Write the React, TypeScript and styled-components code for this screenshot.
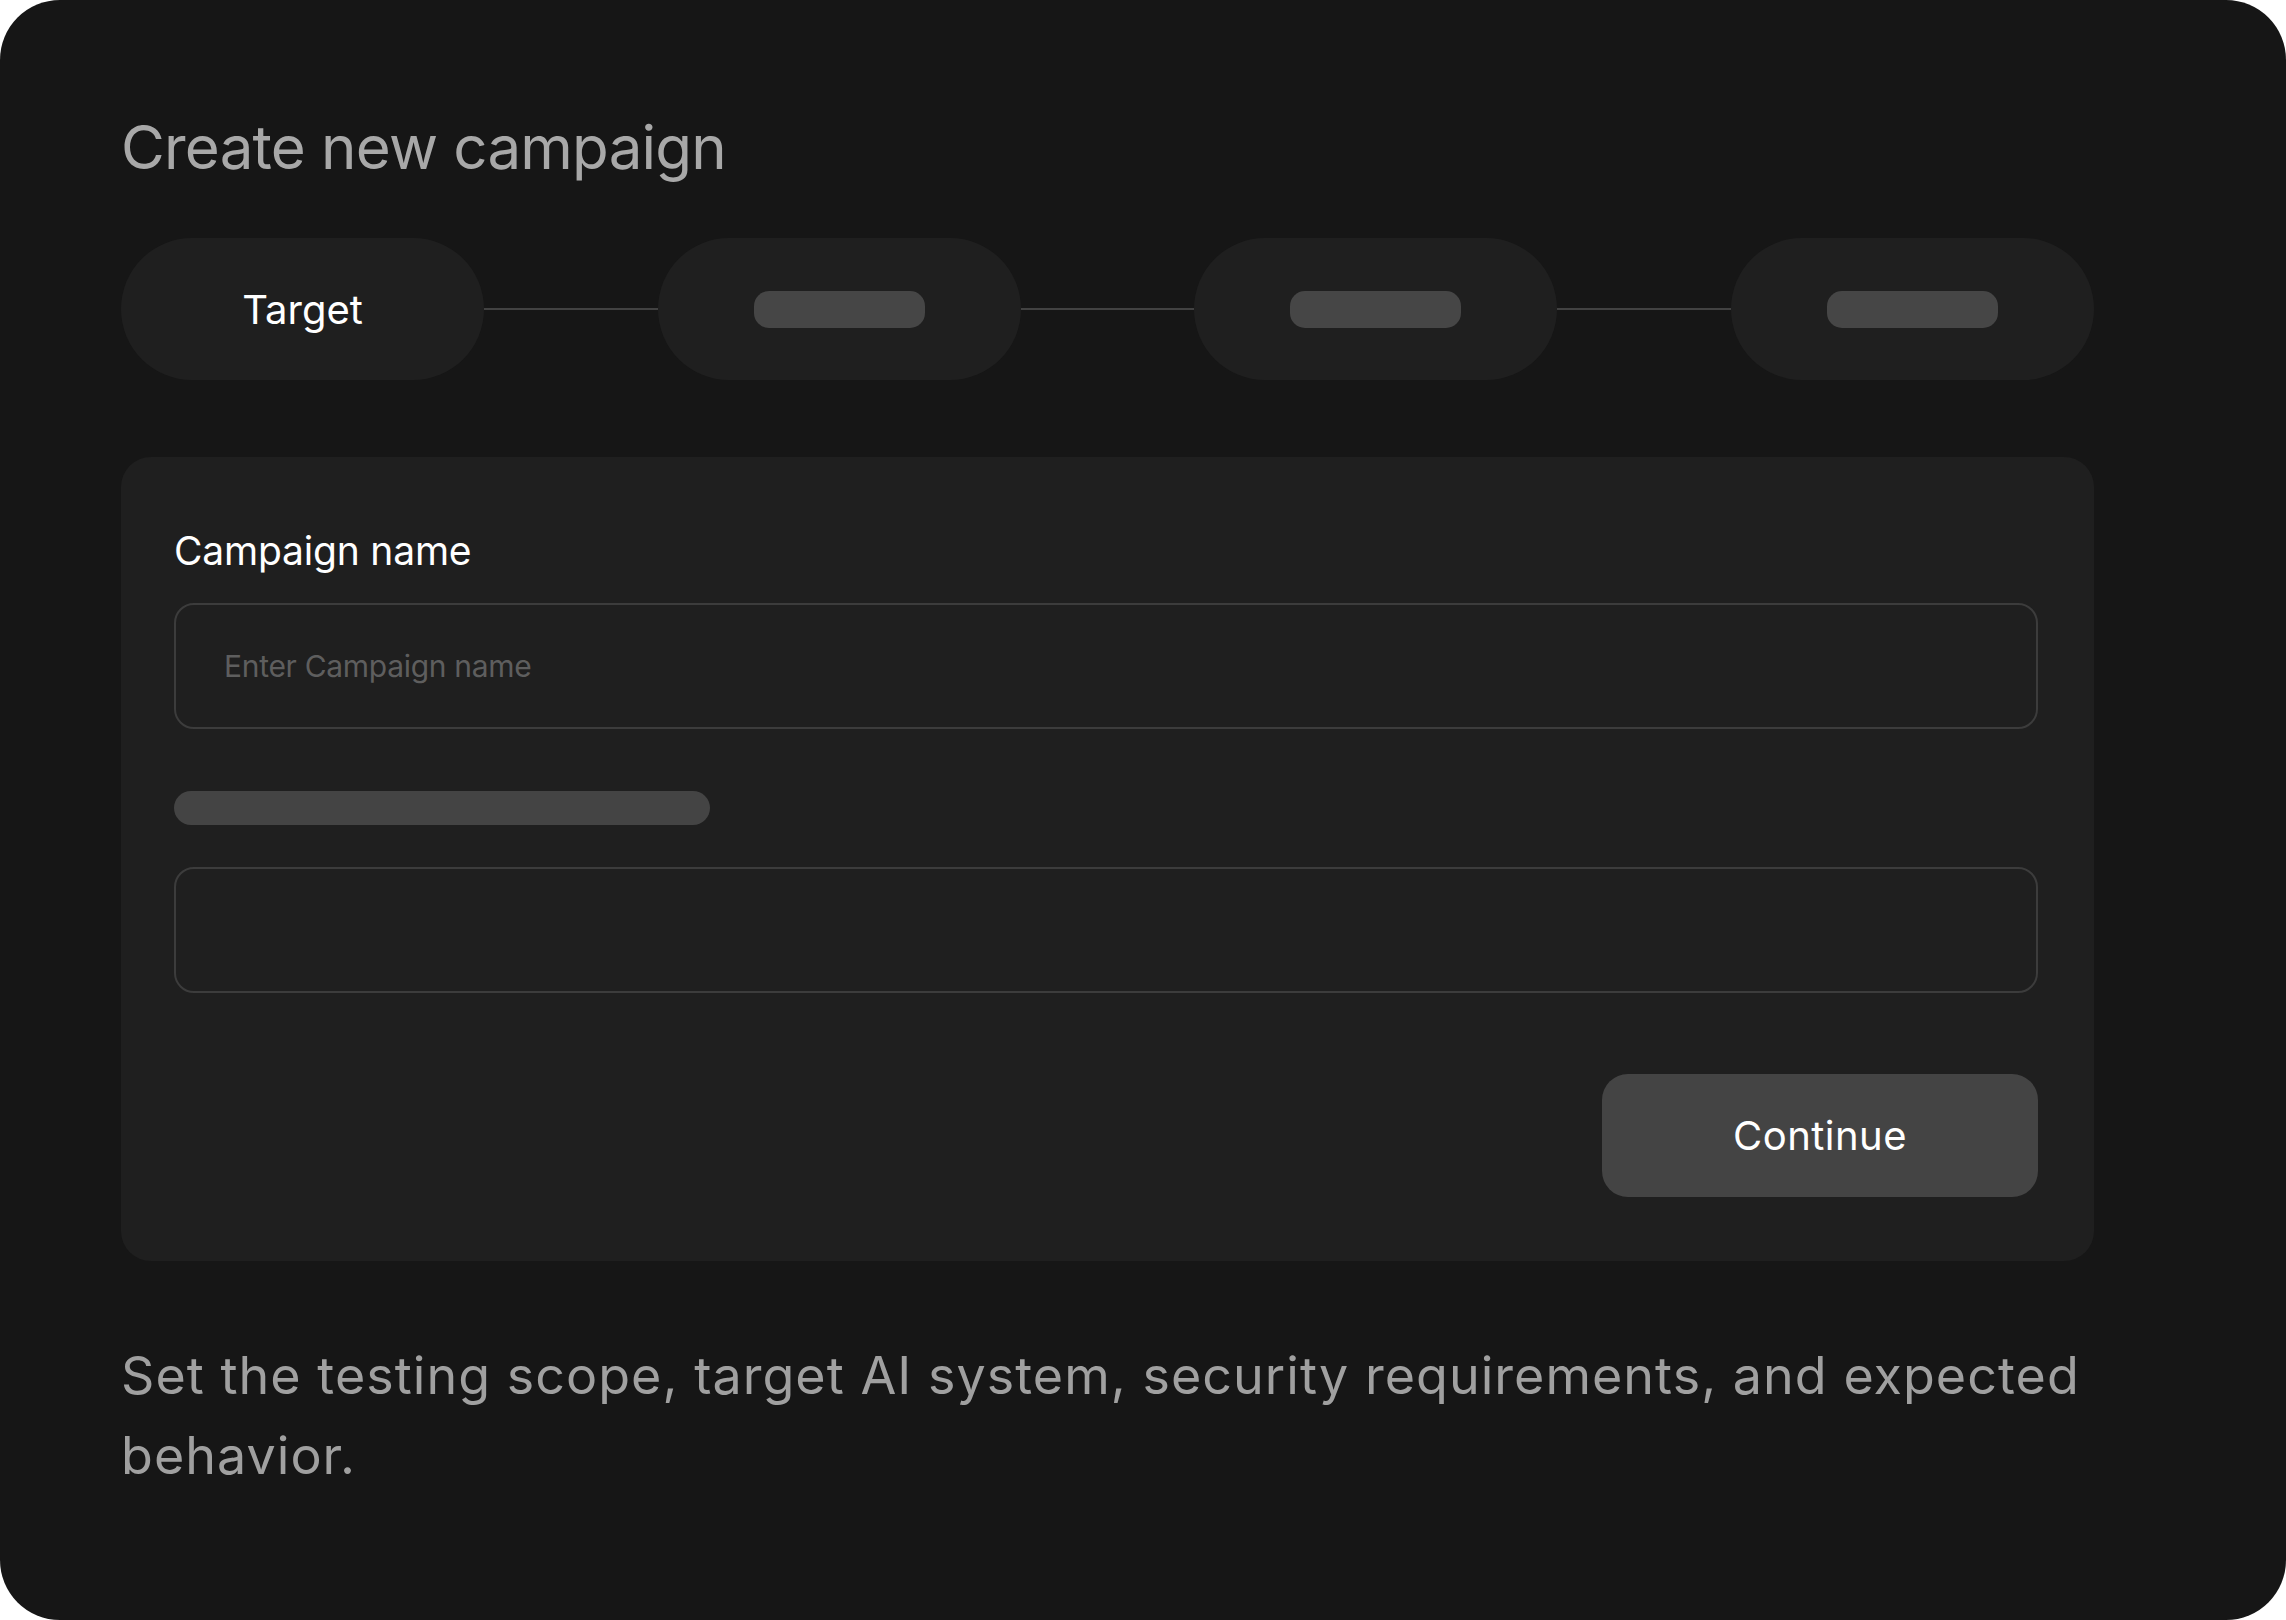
import styled, { createGlobalStyle } from "styled-components";

const GlobalStyle = createGlobalStyle`
  html, body {
    margin: 0;
    padding: 0;
    background: #ffffff;
  }
  * {
    box-sizing: border-box;
  }
`;

const Frame = styled.div`
  width: 2286px;
  height: 1620px;
  background-color: #161616;
  border-radius: 60px;
  padding: 111px 192px 0 121px;
  display: flex;
  flex-direction: column;
  font-family: Inter, "Noto Sans", sans-serif;
  overflow: hidden;
`;

const Title = styled.h1`
  margin: 0;
  font-size: 60px;
  line-height: 72px;
  font-weight: 400;
  letter-spacing: -0.013em;
  color: #a8a8a8;
`;

const Stepper = styled.div`
  margin-top: 55px;
  display: flex;
  align-items: center;
`;

const Step = styled.div`
  width: 363px;
  height: 142px;
  flex-shrink: 0;
  border-radius: 71px;
  background-color: #1f1f1f;
  display: flex;
  align-items: center;
  justify-content: center;
`;

const StepLabel = styled.span`
  font-size: 40px;
  letter-spacing: 0;
  color: #ffffff;
`;

const StepSkeleton = styled.span`
  width: 171px;
  height: 37px;
  border-radius: 15px;
  background-color: #464646;
`;

const Connector = styled.div`
  flex: 1;
  height: 2px;
  background-color: #424242;
`;

const FormCard = styled.section`
  margin-top: 77px;
  background-color: #1f1f1f;
  border-radius: 30px;
  padding: 72px 56px 64px 53px;
  display: flex;
  flex-direction: column;
`;

const FieldLabel = styled.label`
  font-size: 39px;
  line-height: 44px;
  letter-spacing: -0.005em;
  color: #ffffff;
`;

const TextInput = styled.input<{ $gap: number }>`
  margin-top: ${({ $gap }) => $gap}px;
  height: 126px;
  width: 100%;
  border: 2px solid #3c3c3c;
  border-radius: 20px;
  background-color: transparent;
  padding: 0 48px;
  font-family: Inter, "Noto Sans", sans-serif;
  font-size: 30px;
  letter-spacing: -0.01em;
  color: #ffffff;
  outline: none;

  &::placeholder {
    color: #5e5e5e;
  }
`;

const LabelSkeleton = styled.div`
  margin-top: 62px;
  width: 536px;
  height: 34px;
  border-radius: 17px;
  background-color: #444444;
`;

const Actions = styled.div`
  margin-top: 81px;
  display: flex;
  justify-content: flex-end;
`;

const ContinueButton = styled.button`
  width: 436px;
  height: 123px;
  border: none;
  border-radius: 26px;
  background-color: #444444;
  color: #ffffff;
  font-family: Inter, "Noto Sans", sans-serif;
  font-size: 40px;
  letter-spacing: 0.012em;
  cursor: pointer;
`;

const Description = styled.p`
  margin: 75px 0 0;
  font-size: 52px;
  line-height: 80px;
  letter-spacing: 0.02em;
  color: #a0a0a0;
`;

const steps = ["Target", null, null, null];

export default function App() {
  return (
    <>
      <GlobalStyle />
      <Frame>
        <Title>Create new campaign</Title>
        <Stepper>
          {steps.map((label, i) => (
            <>
              {i > 0 && <Connector key={`line-${i}`} />}
              <Step key={`step-${i}`}>
                {label ? <StepLabel>{label}</StepLabel> : <StepSkeleton />}
              </Step>
            </>
          ))}
        </Stepper>
        <FormCard>
          <FieldLabel htmlFor="campaign-name">Campaign name</FieldLabel>
          <TextInput
            id="campaign-name"
            $gap={30}
            placeholder="Enter Campaign name"
          />
          <LabelSkeleton />
          <TextInput $gap={42} />
          <Actions>
            <ContinueButton>Continue</ContinueButton>
          </Actions>
        </FormCard>
        <Description>
          Set the testing scope, target AI system, security requirements, and
          expected behavior.
        </Description>
      </Frame>
    </>
  );
}
